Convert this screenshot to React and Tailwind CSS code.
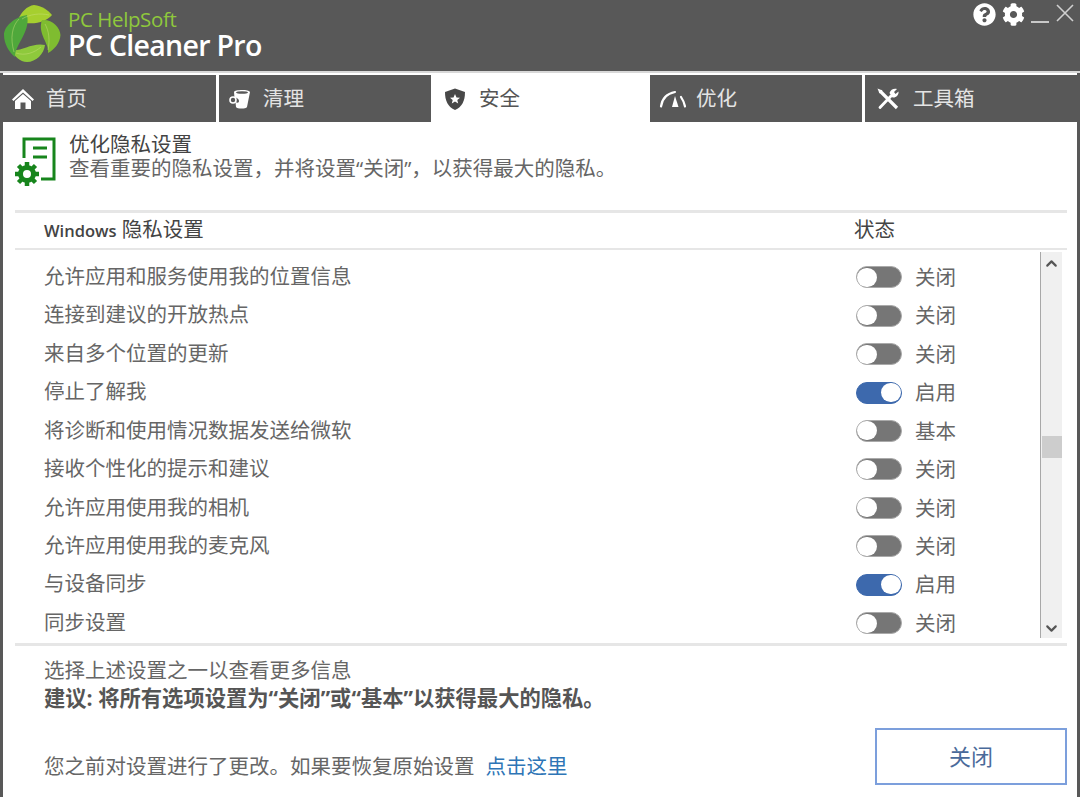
import { ChevronUp, ChevronDown } from "lucide-react";
import { FaQuestionCircle, FaCog } from "react-icons/fa";

const rows = [
    { label: "允许应用和服务使用我的位置信息", status: "关闭", on: false },
    { label: "连接到建议的开放热点", status: "关闭", on: false },
    { label: "来自多个位置的更新", status: "关闭", on: false },
    { label: "停止了解我", status: "启用", on: true },
    { label: "将诊断和使用情况数据发送给微软", status: "基本", on: false },
    { label: "接收个性化的提示和建议", status: "关闭", on: false },
    { label: "允许应用使用我的相机", status: "关闭", on: false },
    { label: "允许应用使用我的麦克风", status: "关闭", on: false },
    { label: "与设备同步", status: "启用", on: true },
    { label: "同步设置", status: "关闭", on: false },
];

const Logo = () => (
    <svg width="64" height="66" viewBox="0 0 64 66" className="shrink-0" fill="none">
        <path d="M18 20C21 12 27 6 34 5C42 6 48 10 52 15C46 22 30 27 18 20Z" fill="#a6cf2f" />
        <path d="M42 20C52 19 60 27 60.500 35C60 43 54 50 48 53C50 44 37 34 42 20Z" fill="#7fbc30" />
        <path d="M45 45C44 54 36 62 27 62C20 62 14 56 12 50C20 52 33 42 45 45Z" fill="#8ec93c" />
        <path d="M27 15C15 17 4 26 4 35C4 44 9 52 15 57C14 46 31 32 27 15Z" fill="#4fa83b" />
        <path d="M22 19C30 14 40 13 49 15M45 24C49 31 50 40 48 50M41 47C34 53 25 56 16 53M19 19C12 26 10 38 14 52" stroke="#c9e07a" strokeWidth="0.800" opacity="0.600" />
    </svg>
);

const HomeIcon = () => (
    <svg width="24" height="22" viewBox="0 0 24 22">
        <path d="M12 1L23 11.500L21.500 13L12 4.500L2.500 13L1 11.500Z" fill="#fff" />
        <path d="M12 6L20 13V21H14.500V14.500H9.500V21H4V13Z" fill="#fff" />
    </svg>
);

const BucketIcon = () => (
    <svg width="24" height="22" viewBox="0 0 24 22" fill="none">
        <path d="M6 4C6 1.500 21 1 22 4L19 19C18 21 9 21 8 19L7.500 14C10 16 12 14 10.500 11.500C9.500 10 7.500 9.500 6.500 10Z" fill="#fff" />
        <ellipse cx="14" cy="4.500" rx="6" ry="1.300" fill="#585858" />
        <circle cx="5" cy="12" r="3" stroke="#fff" strokeWidth="1.600" />
    </svg>
);

const ShieldIcon = () => (
    <svg width="22" height="24" viewBox="0 0 22 24">
        <path d="M11 1.500L21 5C21 14 18 20 11 23C4 20 1 14 1 5Z" fill="#484848" />
        <path d="M11 7L12.500 10.500L16 10.800L13.300 13L14.200 16.500L11 14.600L7.800 16.500L8.700 13L6 10.800L9.500 10.500Z" fill="#fff" />
    </svg>
);

const GaugeIcon = () => (
    <svg width="27" height="18" viewBox="0 0 27 18" fill="none">
        <path d="M2 16.500C3 9 8 3.500 16 2" stroke="#fff" strokeWidth="2.200" strokeLinecap="round" />
        <path d="M16 6L19.500 17H13Z" fill="#fff" />
        <path d="M22 7C24 10 25.500 13 26 16.500" stroke="#fff" strokeWidth="2.200" strokeLinecap="round" />
    </svg>
);

const ToolsIcon = () => (
    <svg width="24" height="24" viewBox="0 0 24 24" fill="none">
        <path d="M4 4L21 21" stroke="#fff" strokeWidth="3.200" />
        <path d="M1.500 1.500L6.500 3.500L3.500 6.500Z" fill="#fff" />
        <path d="M4 20.500L15 9" stroke="#fff" strokeWidth="2.800" strokeLinecap="round" />
        <path d="M13.500 6C14.500 2.500 18 1 21 2L18 5L19.500 7L22.500 4.500C23 8 20 11 16.500 10.500Z" fill="#fff" />
    </svg>
);

const DocGearIcon = () => (
    <svg width="44" height="50" viewBox="0 0 44 50" fill="none" className="mt-[4px] shrink-0">
        <path d="M9 22V3H39V43H26" stroke="#17851c" strokeWidth="3" />
        <path d="M18 12H32M18 21H32" stroke="#17851c" strokeWidth="3" />
        <g transform="translate(12 38)">
            <circle r="6.500" stroke="#17851c" strokeWidth="5" />
            <path d="M0 -12V-7M0 7V12M-12 0H-7M7 0H12M-8.500 -8.500L-5 -5M5 5L8.500 8.500M-8.500 8.500L-5 5M5 -5L8.500 -8.500" stroke="#17851c" strokeWidth="4.500" />
        </g>
    </svg>
);

const Toggle = ({ on }) => (
    <div
        className={`mt-[2px] flex h-[22px] w-[46px] items-center rounded-full border-[1.5px] ${
            on ? "justify-end border-[#3d69ad] bg-[#3d69ad]" : "justify-start border-[#aaaaaa] bg-[#767676]"
        }`}
    >
        <div className="h-[19px] w-[20px] rounded-full bg-white"></div>
    </div>
);

const Tab = ({ icon, label, active, className, gap }) => (
    <div
        className={`flex h-[47px] items-center ${gap} ${className} ${
            active ? "bg-white text-[#555555]" : "bg-[#585858] text-[#e4e4e4]"
        }`}
    >
        {icon}
        <span>{label}</span>
    </div>
);

export default function App() {
    return (
        <div
            className="flex h-[797px] w-[1080px] flex-col overflow-hidden bg-white text-[20.5px] text-[#666666]"
            style={{ fontFamily: '"Open Sans", "Noto Sans CJK SC", sans-serif' }}
        >
            {/* Title bar */}
            <header className="flex h-[73px] shrink-0 justify-between border-b-2 border-[#d8d8d8] bg-[#585858]">
                <div className="flex">
                    <Logo />
                    <div className="ml-[4px] flex flex-col pt-[7px]">
                        <span className="text-[20.5px] font-medium leading-[24px] tracking-[-0.4px] text-[#8fc83c]">PC HelpSoft</span>
                        <span className="text-[28.5px] font-semibold leading-[28px] tracking-[-0.7px] text-white">PC Cleaner Pro</span>
                    </div>
                </div>
                <div className="flex h-[28px] items-start pr-[6px] pt-[3px] text-white">
                    <FaQuestionCircle size={23} />
                    <FaCog size={23} className="ml-[6px]" />
                    <div className="ml-[6px] mt-[18px] h-[2px] w-[18px] bg-[#c8c8c8]"></div>
                    <svg width="18" height="18" viewBox="0 0 18 18" className="ml-[7px] mt-[1px]" stroke="#d0d0d0" strokeWidth="1.600">
                        <path d="M1 1L17 17M17 1L1 17" />
                    </svg>
                </div>
            </header>

            <main className="flex min-h-0 flex-1 flex-col border-x-[3px] border-[#585858]">
                {/* Tabs */}
                <nav className="flex h-[49px] shrink-0 items-start bg-white pt-[2px]">
                    <Tab icon={<HomeIcon />} label="首页" gap="gap-[11px]" className="w-[213px] pl-[8px]" />
                    <Tab icon={<BucketIcon />} label="清理" gap="gap-[11px]" className="ml-[3px] w-[212px] pl-[9px]" />
                    <Tab icon={<ShieldIcon />} label="安全" active gap="gap-[13px]" className="w-[219px] pl-[13px]" />
                    <Tab icon={<GaugeIcon />} label="优化" gap="gap-[10px]" className="w-[212px] pl-[9px]" />
                    <Tab icon={<ToolsIcon />} label="工具箱" gap="gap-[13px]" className="ml-[3px] w-[212px] pl-[11px]" />
                </nav>

                <div className="flex min-h-0 flex-1 flex-col pl-[12px] pr-[10px]">
                    {/* Intro */}
                    <section className="flex h-[88px] shrink-0 items-start pt-[10px]">
                        <DocGearIcon />
                        <div className="ml-[10px] flex flex-col leading-[24px]">
                            <span className="text-[#444444]">优化隐私设置</span>
                            <span>查看重要的隐私设置，并将设置“关闭”，以获得最大的隐私。</span>
                        </div>
                    </section>

                    {/* Table head */}
                    <div className="flex h-[38px] shrink-0 items-center border-t-[3px] border-[#e6e6e6] pb-[3px] pl-[29px] text-[#444444]">
                        <span className="flex-1">
                            <span className="text-[16.5px] font-semibold">Windows</span> 隐私设置
                        </span>
                        <span className="mr-[172px]">状态</span>
                    </div>

                    {/* Rows */}
                    <section className="flex h-[398px] shrink-0 border-t-[2px] border-b-[3px] border-[#e6e6e6] pr-[5px]">
                        <div className="min-w-0 flex-1 pl-[29px] pt-[7px]">
                            {rows.map((row) => (
                                <div key={row.label} className="flex h-[38.44px] items-center">
                                    <span className="flex-1 leading-none">{row.label}</span>
                                    <Toggle on={row.on} />
                                    <span className="ml-[13px] mr-[84px] mt-[2px] w-[41px] leading-none">{row.status}</span>
                                </div>
                            ))}
                        </div>
                        <div className="mt-[2px] flex h-[386px] w-[22px] shrink-0 flex-col items-center border-l border-[#a8a8a8] bg-[#f0f0f0] pt-[3px]">
                            <ChevronUp size={17} strokeWidth={3} color="#555" />
                            <div className="mt-[164px] h-[22px] w-[20px] bg-[#cdcdcd]"></div>
                            <ChevronDown size={17} strokeWidth={3} color="#555" className="mt-auto mb-[1px]" />
                        </div>
                    </section>

                    {/* Footer */}
                    <footer className="flex min-h-0 flex-1 flex-col pl-[29px] pt-[11px]">
                        <p className="leading-[27px]">选择上述设置之一以查看更多信息</p>
                        <p className="text-[21.3px] font-bold leading-[28px] text-[#555555]">建议: 将所有选项设置为“关闭”或“基本”以获得最大的隐私。</p>
                        <div className="mt-[16px] flex items-start justify-between">
                            <p className="pt-[24px] leading-[28px]">
                                您之前对设置进行了更改。如果要恢复原始设置<a className="ml-[11px] text-[#2e75b6]">点击这里</a>
                            </p>
                            <button className="h-[57px] w-[192px] border-2 border-[#7c9fdc] text-[22px] text-[#4a6a9a]">关闭</button>
                        </div>
                    </footer>
                </div>
            </main>
        </div>
    );
}
